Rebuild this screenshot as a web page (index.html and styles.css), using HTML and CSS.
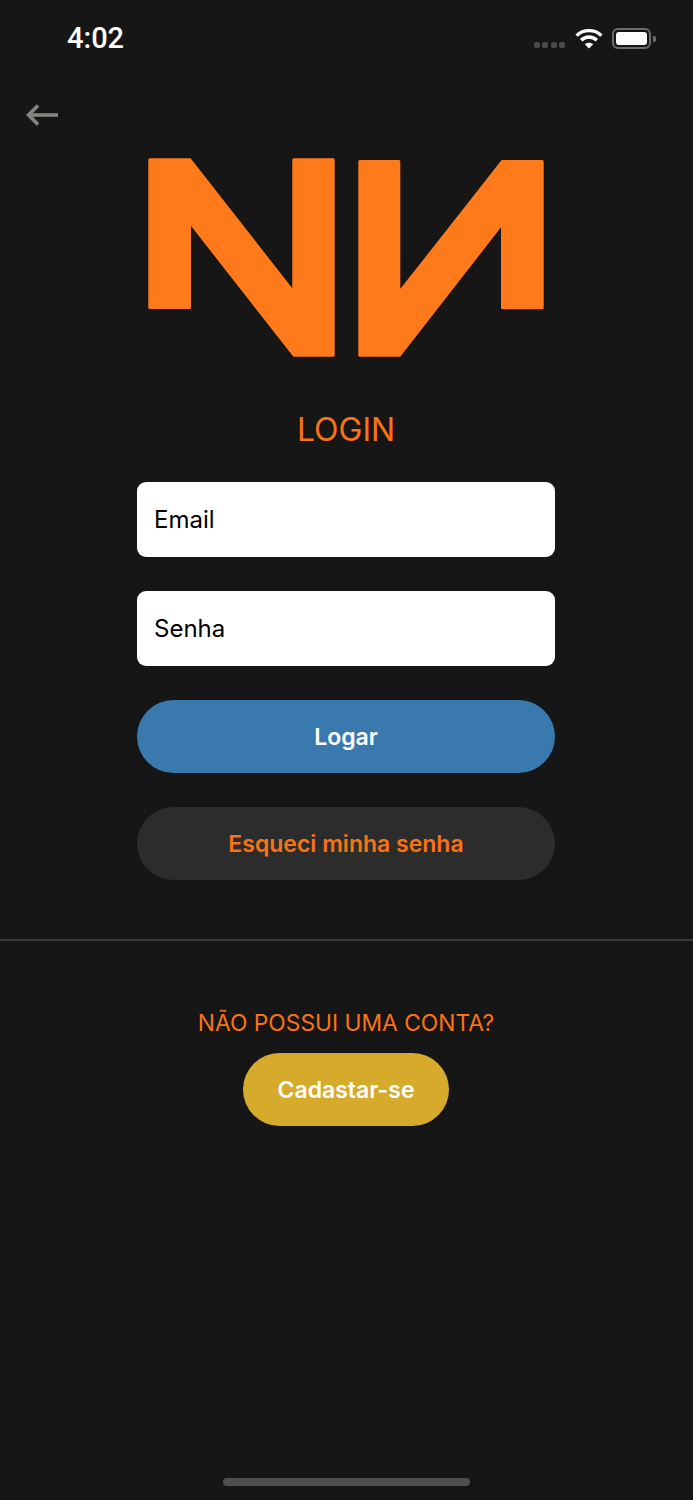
FILE: index.html
```html
<!DOCTYPE html>
<html lang="en">
<head>
    <meta charset="UTF-8">
    <meta name="viewport" content="width=device-width, initial-scale=1.0">
    <title>Login</title>
    <link rel="stylesheet" href="styles.css">
</head>
<body>

    <div class="screen">
        <div class="status-bar">
            <span class="time">4:02</span>
            <div class="status-icons">
                <div class="signal">
                    <span></span><span></span><span></span><span></span>
                </div>
                <svg class="wifi" width="28" height="21" viewBox="0 0 28 21" fill="none" stroke="#fff" stroke-width="3.4">
                    <path d="M1.6 7.6C8.4 1 19.6 1 26.4 7.6"/>
                    <path d="M6.2 12.2C10.6 8 17.4 8 21.8 12.2"/>
                    <path d="M14 20.6L9.8 16.2C12.2 14.2 15.8 14.2 18.2 16.2Z" fill="#fff" stroke="none"/>
                </svg>
                <div class="battery">
                    <div class="battery-body"><div class="battery-fill"></div></div>
                    <div class="battery-nub"></div>
                </div>
            </div>
        </div>

        <div class="back-row">
            <svg width="33" height="22" viewBox="0 0 33 22" fill="none" stroke="#85857f" stroke-width="3.6">
                <path d="M32 11H3"/>
                <path d="M12 1.5L2.5 11L12 20.5"/>
            </svg>
        </div>

        <svg class="logo" width="396" height="199" viewBox="148 158 396 199" fill="#ff7a1b" stroke="#ff7a1b" stroke-width="3" stroke-linejoin="round">
            <path d="M149.800 159.800H190L293.800 292.700V159.800H333.200V355.200H294L189.500 221.600V307.500H149.800Z"/>
            <path d="M359.800 161.500H398.800V293.300L502.400 161.500H542.200V307.800H502.500V222.900L399.600 355.200H359.800Z"/>
        </svg>

        <h1 class="title">LOGIN</h1>

        <div class="form">
            <input class="field" type="text" placeholder="Email">
            <input class="field" type="password" placeholder="Senha">
            <button class="btn btn-login">Logar</button>
            <button class="btn btn-forgot">Esqueci minha senha</button>
        </div>

        <div class="divider"></div>

        <div class="signup">
            <p class="signup-text">NÃO POSSUI UMA CONTA?</p>
            <button class="btn btn-signup">Cadastar-se</button>
        </div>

        <div class="home-bar"></div>
    </div>

</body>
</html>
```

FILE: styles.css
```css
* {
    box-sizing: border-box;
}

body {
    margin: 0;
    background-color: #161616;
    font-family: 'Inter', 'Liberation Sans', sans-serif;
}

.screen {
    width: 692px;
    height: 1500px;
    display: flex;
    flex-direction: column;
    align-items: center;
}

.status-bar {
    width: 693px;
    height: 76px;
    flex: none;
    align-self: flex-start;
    padding: 0 37px 0 67px;
    display: flex;
    justify-content: space-between;
    align-items: flex-start;
}

.time {
    margin-top: 21px;
    font-family: 'Roboto', sans-serif;
    font-size: 29px;
    line-height: 34px;
    font-weight: 500;
    color: #fff;
}

.status-icons {
    margin-top: 28px;
    display: flex;
    align-items: flex-start;
}

.signal {
    margin-top: 14px;
    margin-right: 10px;
    display: flex;
    gap: 2.5px;
}

.signal span {
    width: 6px;
    height: 6px;
    border-radius: 2px;
    background-color: #4a4a4a;
}

.wifi {
    margin-right: 9px;
}

.battery {
    display: flex;
    align-items: center;
}

.battery-body {
    width: 39px;
    height: 21px;
    padding: 2px;
    border: 2px solid #6c6c6c;
    border-radius: 6px;
}

.battery-fill {
    height: 100%;
    background-color: #fff;
    border-radius: 3px;
}

.battery-nub {
    width: 3px;
    height: 6px;
    margin-left: 2px;
    background-color: #6c6c6c;
    border-radius: 0 2px 2px 0;
}

.back-row {
    width: 100%;
    height: 82px;
    padding: 28px 0 0 26px;
}

.back-row svg {
    display: block;
}

.logo {
    display: block;
}

.title {
    margin: 54px 0 0;
    font-size: 32px;
    line-height: 38px;
    font-weight: 400;
    color: #f97316;
}

.form {
    width: 418px;
    margin-top: 33px;
    display: flex;
    flex-direction: column;
    gap: 34px;
}

.field {
    height: 75px;
    padding: 0 17px;
    border: none;
    border-radius: 9px;
    background-color: white;
    font-family: inherit;
    font-size: 24px;
    color: #000;
}

.field::placeholder {
    color: #000;
    opacity: 1;
}

.btn {
    height: 73px;
    border: none;
    border-radius: 37px;
    font-family: inherit;
    font-size: 23px;
    font-weight: 600;
    cursor: pointer;
}

.btn-login {
    background-color: #3a79ae;
    color: white;
}

.btn-forgot {
    background-color: #2c2c2c;
    color: #f97316;
}

.divider {
    width: 693px;
    height: 2px;
    flex: none;
    align-self: flex-start;
    margin-top: 59px;
    background-color: #3a3a3a;
}

.signup {
    margin-top: 67px;
    display: flex;
    flex-direction: column;
    align-items: center;
}

.signup-text {
    margin: 0;
    font-size: 22.800px;
    line-height: 29px;
    color: #f97316;
}

.btn-signup {
    width: 206px;
    margin-top: 16px;
    background-color: #d6ab2c;
    color: white;
}

.home-bar {
    width: 247px;
    height: 8px;
    margin-top: auto;
    margin-bottom: 14px;
    border-radius: 4px;
    background-color: #4f4f4f;
}
```
